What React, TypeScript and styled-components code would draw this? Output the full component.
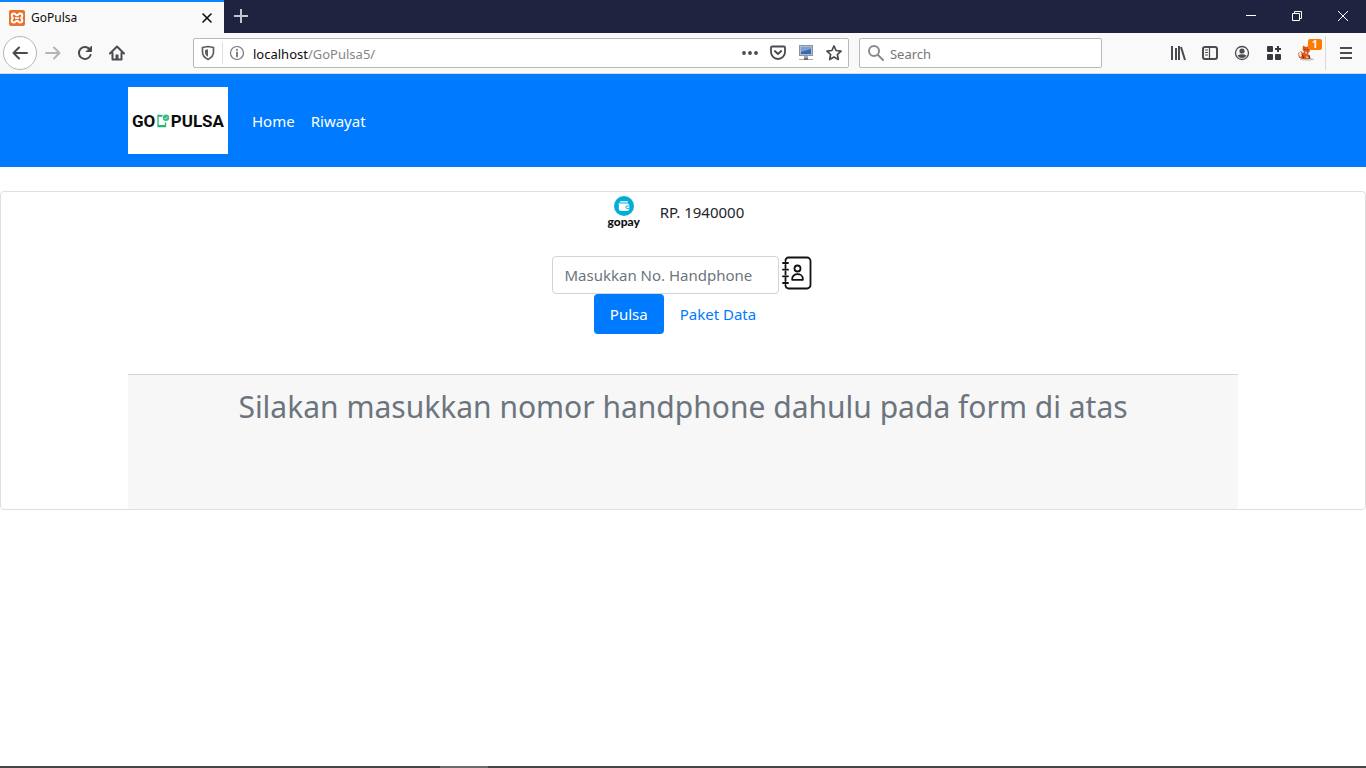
import React from 'react';
import styled, { createGlobalStyle } from 'styled-components';

const GlobalStyle = createGlobalStyle`
  *, *::before, *::after { box-sizing: border-box; }
  body { margin: 0; background: #fff; color: #212529; font: 16px/24px "Noto Sans", "Open Sans", sans-serif; }
  button, input { font: inherit; }
  h1, ul { margin: 0; padding: 0; }
  svg { display: block; flex: none; }
`;

const Page = styled.div`
  min-height: 100vh;
  display: flex;
  flex-direction: column;
`;

const TitleBar = styled.header`
  display: flex;
  height: 33px;
  background: #202340;
`;

const Tab = styled.div`
  display: flex;
  align-items: center;
  width: 224px;
  padding: 0 9px;
  gap: 6px;
  background: #f9f9fa;
  border-top: 2px solid #0a84ff;
  font-size: 12px;
  color: #0c0c0d;
`;

const TabTitle = styled.span`
  flex: 1;
`;

const BareButton = styled.button<{ $width?: number }>`
  display: flex;
  align-items: center;
  justify-content: center;
  width: ${({ $width }) => ($width ? `${$width}px` : 'auto')};
  padding: 0;
  border: 0;
  background: none;
  color: inherit;
`;

const TitleButton = styled(BareButton)`
  height: 32px;
`;

const WindowControls = styled.div`
  display: flex;
  margin-left: auto;
  color: #fff;
`;

const Toolbar = styled.div`
  display: grid;
  grid-template-columns: 190px minmax(0, 656fr) minmax(0, 243fr) auto;
  align-items: center;
  height: 41px;
  padding-left: 3px;
  background: #f9f9fa;
  border-bottom: 1px solid #d8dce4;
  color: #4a4a4f;
`;

const BackButton = styled(BareButton)`
  width: 34px;
  height: 34px;
  border: 1px solid #b5b5b7;
  border-radius: 50%;
  background: #fff;
`;

const NavGroup = styled.div`
  display: flex;
  align-items: center;
`;

const Field = styled.div`
  display: flex;
  align-items: center;
  height: 30px;
  border: 1px solid #b9b9bb;
  border-radius: 2px;
  background: #fff;
`;

const SearchField = styled(Field)`
  padding-left: 8px;
  gap: 6px;
  color: #8a8a8c;
`;

const Fields = styled.div`
  display: grid;
  grid-column: 2 / span 2;
  grid-template-columns: minmax(0, 656fr) minmax(0, 243fr);
  gap: 10px;
`;

const ShieldCell = styled.span`
  display: flex;
  justify-content: center;
  width: 29px;
  height: 22px;
  align-items: center;
  border-right: 1px solid #dededf;
  color: #5f5f63;
`;

const InfoCell = styled.span`
  display: flex;
  padding: 0 8px 0 6px;
  color: #737377;
`;

const AddressText = styled.span`
  flex: 1;
  min-width: 0;
  padding-top: 2px;
  font-size: 13px;
  line-height: 20px;
  white-space: nowrap;
  color: #858588;
`;

const Host = styled.span`
  color: #0c0c0d;
`;

const SearchInput = styled.input`
  flex: 1;
  min-width: 0;
  padding: 2px 0 0;
  border: 0;
  outline: 0;
  background: none;
  font-size: 13px;
  line-height: 20px;
  &::placeholder { color: #757575; opacity: 1; }
`;

const ToolGroup = styled.div`
  display: flex;
  align-items: center;
  margin-left: 60px;
`;

const Divider = styled.span`
  width: 1px;
  height: 34px;
  margin-left: 3px;
  background: #d9d9da;
`;

const AddonButton = styled(BareButton)`
  position: relative;
`;

const Badge = styled.span`
  position: absolute;
  top: -6px;
  right: 0;
  width: 14px;
  height: 11px;
  border-radius: 2px;
  background: #ff7a00;
  color: #fff;
  font: bold 10px/11px "Noto Sans", sans-serif;
`;

const Navbar = styled.nav`
  padding: 13px 0;
  background: #007bff;
`;

const Container = styled.div`
  width: 100%;
  max-width: 1140px;
  margin: 0 auto;
  padding: 0 15px;
`;

const NavRow = styled(Container)`
  display: flex;
  align-items: center;
`;

const Brand = styled.a`
  display: flex;
  align-items: center;
  justify-content: space-between;
  width: 100px;
  height: 67px;
  margin-right: 16px;
  padding: 0 4px;
  background: #fff;
  color: #0b0b0b;
  font: bold 17px/24px Roboto, sans-serif;
  text-decoration: none;
`;

const NavList = styled.ul`
  display: flex;
  list-style: none;
`;

const NavLink = styled.a`
  display: block;
  padding: 8px;
  color: #fff;
  font-size: 15px;
  text-decoration: none;
`;

const Card = styled.main`
  display: flex;
  flex-direction: column;
  align-items: center;
  margin-top: 24px;
  border: 1px solid #dfdfdf;
  border-radius: 4px;
`;

const Balance = styled.div`
  display: flex;
  align-items: center;
  gap: 16px;
  height: 40px;
  padding-right: 18px;
  font-size: 15px;
`;

const Gopay = styled.div`
  display: flex;
  flex-direction: column;
  align-items: center;
  width: 40px;
  font: 900 12px/12px Lato, sans-serif;
  color: #111;
`;

const PhoneRow = styled.form`
  display: flex;
  align-items: flex-start;
  gap: 2px;
  margin-top: 24px;
  padding-right: 2px;
`;

const PhoneInput = styled.input`
  width: 227px;
  height: 38px;
  padding: 6px 12px;
  border: 1px solid #ced4da;
  border-radius: 4px;
  font-size: 15px;
  &::placeholder { color: #6c757d; opacity: 1; }
`;

const Pills = styled.div`
  display: flex;
`;

const Pill = styled.button<{ $active?: boolean }>`
  height: 40px;
  padding: 8px 16px;
  border: 0;
  border-radius: 4px;
  background: ${({ $active }) => ($active ? '#007bff' : 'transparent')};
  color: ${({ $active }) => ($active ? '#fff' : '#007bff')};
  font-size: 15px;
  line-height: 24px;
`;

const Notice = styled.section`
  height: 135px;
  border-top: 1px solid #d5d5d5;
  border-radius: 0 0 3px 3px;
  background: #f7f7f7;
  padding: 13px 20px;
`;

const NoticeWrap = styled(Container)`
  margin-top: 40px;
`;

const Heading = styled.h1`
  color: #6c757d;
  font-size: 30px;
  font-weight: 400;
  line-height: 38px;
  text-align: center;
`;

const Taskbar = styled.footer`
  display: flex;
  height: 2px;
  margin-top: auto;
  padding-left: 440px;
  background: #464648;
`;

const ActiveTask = styled.span`
  width: 48px;
  background: #6b6b6d;
`;

type IconProps = { size?: number; children: React.ReactNode; weight?: number };
const Icon = ({ size = 16, weight = 2, children }: IconProps) => (
  <svg width={size} height={size} viewBox="0 0 16 16" fill="none" stroke="currentColor" strokeWidth={weight} strokeLinecap="round" strokeLinejoin="round" aria-hidden="true">
    {children}
  </svg>
);

const XamppIcon = () => (
  <svg width="16" height="16" viewBox="0 0 16 16" aria-hidden="true">
    <rect width="16" height="16" rx="2" fill="#e8712b" />
    <path d="M5 3.5c-1.800 0-2.300 1-2.300 2.200S3.300 7.500 4 8c-.7.500-1.300 1.100-1.300 2.300S3.200 12.500 5 12.500c1.600 0 1.500-1.800 3-1.800s1.400 1.800 3 1.800c1.800 0 2.300-1 2.300-2.200S12.700 8.500 12 8c.7-.5 1.300-1.100 1.300-2.300S12.800 3.500 11 3.500c-1.600 0-1.500 1.800-3 1.800S6.600 3.500 5 3.500z" fill="none" stroke="#fff" strokeWidth="2" strokeLinejoin="round" />
    <path d="M6 8h4" stroke="#fff" strokeWidth="1.600" />
  </svg>
);

const FoxIcon = () => (
  <svg width="16" height="16" viewBox="0 0 16 16" aria-hidden="true">
    <ellipse cx="9" cy="14.300" rx="7" ry="1.400" fill="#c9c4c0" />
    <path d="M5 0.500l3 1.500 3-1 1 5-2 2.500 2 3.500v2H4L1 12.500 0 8l3-2 2 2 1-1-1.500-2.500z" fill="#d9591c" />
    <path d="M0.500 8l2.500-1.500 1 4.500-2 1zM7 6l2 1.500L8 9.500zM8.500 10.500l2 2.500h-2z" fill="#fbe4d2" />
    <path d="M4 9.500l2 4M6.500 4.500h1M9.500 4.500h1M11 10l1 3.500" stroke="#74290f" strokeWidth="1" />
  </svg>
);

const PhoneMark = () => (
  <svg width="13" height="14" viewBox="0 0 13 14" aria-hidden="true">
    <path d="M5.500 1.500H1v11h7.500V8.500" fill="none" stroke="#27b573" strokeWidth="1.300" />
    <path d="M1 11.800h7.500M1 2h4" stroke="#27b573" strokeWidth="1.500" />
    <circle cx="9" cy="3.800" r="3.200" fill="#3bba80" />
    <path d="M7.500 3.900l1.100 1.100 2-2.200" fill="none" stroke="#d7f5e5" strokeWidth="0.800" />
  </svg>
);

const WalletMark = () => (
  <svg width="20" height="20" viewBox="0 0 20 20" aria-hidden="true">
    <circle cx="10" cy="10" r="10" fill="#00aed6" />
    <path d="M6.500 5.200h6.500a1.200 1.200 0 0 1 1.200 1.200H6.500a.6.600 0 0 1 0-1.200z" fill="#fff" />
    <path d="M4.800 6.300q.3 1.200 1.700 1.200h7a1.700 1.700 0 0 1 1.700 1.700v3.600a2.200 2.200 0 0 1-2.200 2.200H7a2.200 2.200 0 0 1-2.200-2.200z" fill="#fff" />
    <path d="M15.200 10h-2.200a1.200 1.200 0 0 0 0 2.400h2.200" fill="#fff" stroke="#00aed6" strokeWidth="0.900" />
  </svg>
);

const ContactBookIcon = () => (
  <svg width="32" height="34" viewBox="0 0 32 34" fill="none" stroke="#111" strokeWidth="1.800" strokeLinecap="round" aria-hidden="true">
    <path d="M4.500 5V4.500a3 3 0 0 1 3-3H26A3.500 3.500 0 0 1 29.500 5v24a3.500 3.500 0 0 1-3.500 3.500H7.500a3 3 0 0 1-3-3V29M4.500 9v3M4.500 15.500v3M4.500 22v3" />
    <path d="M2 7h5M2 13.700h5M2 20.300h5M2 27h5" />
    <circle cx="16.500" cy="12.500" r="3" />
    <path d="M11.200 23.800v-1.300a5.300 4.300 0 0 1 10.600 0v1.300z" strokeLinejoin="round" />
  </svg>
);

export default function App() {
  return (
    <>
      <GlobalStyle />
      <Page>
        <TitleBar>
          <Tab>
            <XamppIcon />
            <TabTitle>GoPulsa</TabTitle>
            <BareButton aria-label="Close tab"><Icon weight={1.6}><path d="M4 4l8 8M12 4l-8 8" /></Icon></BareButton>
          </Tab>
          <TitleButton $width={34} aria-label="New tab">
            <svg width="14" height="14" viewBox="0 0 14 14" stroke="#c3c4cc" strokeWidth="2"><path d="M7 0v14M0 7h14" /></svg>
          </TitleButton>
          <WindowControls>
            <TitleButton $width={46} aria-label="Minimize">
              <svg width="10" height="10" stroke="currentColor"><path d="M0 4.500h10" /></svg>
            </TitleButton>
            <TitleButton $width={46} aria-label="Restore">
              <svg width="10" height="10" fill="none" stroke="currentColor"><path d="M0.500 2.500h7v7h-7zM2.500 2.500v-2h7v7h-2" /></svg>
            </TitleButton>
            <TitleButton $width={46} aria-label="Close window">
              <svg width="10" height="10" stroke="currentColor"><path d="M0 0l10 10M10 0L0 10" /></svg>
            </TitleButton>
          </WindowControls>
        </TitleBar>

        <Toolbar>
          <NavGroup>
            <BackButton aria-label="Back"><Icon><path d="M15 8H1.500M7 2.500L1.500 8 7 13.500" /></Icon></BackButton>
            <BareButton $width={32} aria-label="Forward" disabled>
              <svg width="16" height="16" viewBox="0 0 16 16" fill="none" stroke="#b4b4b6" strokeWidth="2" strokeLinecap="round" strokeLinejoin="round"><path d="M1 8h13.500M9 2.500L14.500 8 9 13.500" /></svg>
            </BareButton>
            <BareButton $width={32} aria-label="Reload">
              <Icon><path d="M13 4.700A6 6 0 1 0 13.600 10" /><path d="M14.500 1.500v5h-5z" fill="currentColor" strokeWidth="1" /></Icon>
            </BareButton>
            <BareButton $width={32} aria-label="Home page">
              <Icon><path d="M1 8.500L8 1.500l7 7M3.500 8v6.500h9V8" /><path d="M8 9.500V14" strokeWidth="3" strokeLinecap="butt" /></Icon>
            </BareButton>
          </NavGroup>

          <Fields>
            <Field>
              <ShieldCell>
                <Icon><path d="M8 1.500l5.500 1v4.500c0 4-2.500 6-5.500 7.500-3-1.500-5.500-3.500-5.500-7.500V2.500z" strokeWidth="1.700" /><path d="M8 4.300L5 5v2.500c0 2 1.200 3.400 3 4.300z" fill="currentColor" stroke="none" /></Icon>
              </ShieldCell>
              <InfoCell>
                <Icon weight={1.2}><circle cx="8" cy="8" r="6.500" /><path d="M8 7.500v4M8 4.700v.3" strokeWidth="1.800" /></Icon>
              </InfoCell>
              <AddressText><Host>localhost</Host>/GoPulsa5/</AddressText>
              <BareButton $width={28} aria-label="Page actions">
                <svg width="16" height="16" viewBox="0 0 16 16" fill="currentColor"><circle cx="2" cy="8" r="1.900" /><circle cx="8" cy="8" r="1.900" /><circle cx="14" cy="8" r="1.900" /></svg>
              </BareButton>
              <BareButton $width={28} aria-label="Save to Pocket">
                <Icon weight={1.8}><path d="M2 1.500h12a1 1 0 0 1 1 1v4.500a7 7 0 0 1-14 0V2.500a1 1 0 0 1 1-1z" /><path d="M4.800 6l3.200 3 3.200-3" /></Icon>
              </BareButton>
              <BareButton $width={28} aria-label="Local server">
                <svg width="16" height="16" viewBox="0 0 16 16"><rect x="1.500" y="0.500" width="13" height="10" fill="#b3bdc9" stroke="#8795a5" /><path d="M3 2h10v7H3z" fill="#3868b0" /><path d="M3 2h10v2L3 7z" fill="#78a0d2" /><path d="M6 11h4v2H6z" fill="#a1a9af" /><path d="M1 14.500h14" stroke="#a3abb0" /><path d="M6 14h4" stroke="#646f75" strokeWidth="2" /></svg>
              </BareButton>
              <BareButton $width={28} aria-label="Bookmark this page">
                <Icon weight={1.700}><path d="M8 1l2.100 4.500 4.900.6-3.600 3.400.9 5L8 12.100l-4.300 2.400.9-5L1 6.100l4.900-.6z" /></Icon>
              </BareButton>
            </Field>

            <SearchField>
              <Icon><circle cx="6" cy="6" r="5" /><path d="M10 10l5 5" /></Icon>
              <SearchInput aria-label="Search" placeholder="Search" />
            </SearchField>
          </Fields>

          <ToolGroup>
            <BareButton $width={32} aria-label="Library">
              <svg width="16" height="16" viewBox="0 0 16 16" stroke="currentColor" strokeWidth="2"><path d="M2 1v14M6 3v12M9 1v14M11 2l4 13" /></svg>
            </BareButton>
            <BareButton $width={32} aria-label="Sidebars">
              <Icon><rect x="1" y="2" width="14" height="12" rx="2" /><path d="M7.500 2v12" strokeWidth="1.200" /><path d="M3.500 5h2M3.500 7.500h2M3.500 10h2" strokeWidth="1" /></Icon>
            </BareButton>
            <BareButton $width={32} aria-label="Account">
              <Icon weight={1.3}><circle cx="8" cy="8" r="6.500" /><circle cx="8" cy="6" r="2.600" fill="currentColor" stroke="none" /><path d="M3.500 10.500q4.500-2.500 9 0Q11 13 8 13t-4.500-2.500z" fill="currentColor" stroke="none" /></Icon>
            </BareButton>
            <BareButton $width={32} aria-label="Extensions">
              <svg width="16" height="16" viewBox="0 0 16 16" fill="#38383d"><rect x="1" y="1" width="6" height="6" rx="1" /><rect x="1" y="9" width="6" height="6" rx="1" /><rect x="9" y="9" width="6" height="6" rx="1" /><path d="M11 1h2v2h2v2h-2v2h-2V5H9V3h2z" /></svg>
            </BareButton>
            <AddonButton $width={32} aria-label="Fox add-on, 1 notice"><FoxIcon /><Badge>1</Badge></AddonButton>
            <Divider />
            <BareButton $width={40} aria-label="Menu">
              <svg width="12" height="12" viewBox="0 0 12 12" stroke="currentColor" strokeWidth="2"><path d="M0 1h12M0 6h12M0 11h12" /></svg>
            </BareButton>
          </ToolGroup>
        </Toolbar>

        <Navbar>
          <NavRow>
            <Brand href="#" aria-label="Go Pulsa"><span>GO</span><PhoneMark /><span>PULSA</span></Brand>
            <NavList>
              <li><NavLink href="#">Home</NavLink></li>
              <li><NavLink href="#">Riwayat</NavLink></li>
            </NavList>
          </NavRow>
        </Navbar>

        <Card>
          <Balance>
            <Gopay><WalletMark /><span>gopay</span></Gopay>
            <span>RP. 1940000</span>
          </Balance>
          <PhoneRow>
            <PhoneInput type="tel" aria-label="No. Handphone" placeholder="Masukkan No. Handphone" />
            <BareButton type="button" aria-label="Kontak"><ContactBookIcon /></BareButton>
          </PhoneRow>
          <Pills>
            <Pill $active>Pulsa</Pill>
            <Pill>Paket Data</Pill>
          </Pills>
          <NoticeWrap>
            <Notice>
              <Heading>Silakan masukkan nomor handphone dahulu pada form di atas</Heading>
            </Notice>
          </NoticeWrap>
        </Card>

        <Taskbar><ActiveTask /></Taskbar>
      </Page>
    </>
  );
}
